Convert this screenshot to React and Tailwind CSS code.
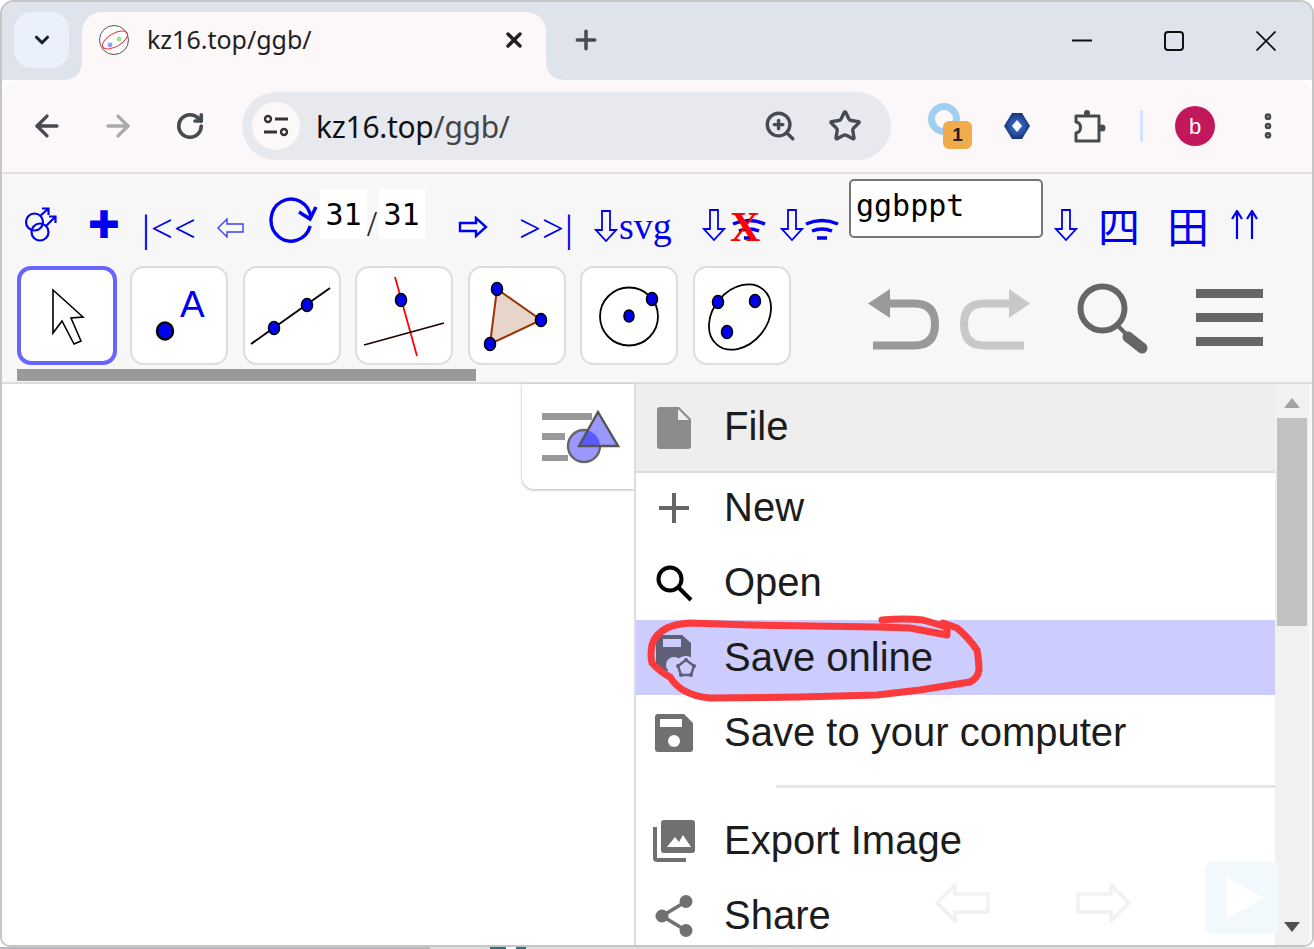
import { ChevronDown, X, Plus, ArrowLeft, ArrowRight, RotateCw, ZoomIn, Star, MoreVertical } from "lucide-react";

const Dot = ({ cx, cy, r = 5.5 }) => (
  <ellipse cx={cx} cy={cy} rx={r} ry={r + 1} fill="#0000f0" stroke="#000" strokeWidth="1.6" />
);

const tools = [
  <>
    <path d="M34 22 L34 65 L43 53 L55 76 L62 73 L52 50 L64 49 Z" fill="#fff" stroke="#000" strokeWidth="1.6" />
  </>,
  <>
    <ellipse cx="34" cy="63" rx="8" ry="8.5" fill="#0000f0" stroke="#000" strokeWidth="2.5" />
    <text x="49" y="48.5" fontSize="37" fill="#0000f0" fontFamily="Liberation Sans, sans-serif">A</text>
  </>,
  <>
    <line x1="7" y1="76" x2="86" y2="20" stroke="#000" strokeWidth="2" />
    <Dot cx={30} cy={60} />
    <Dot cx={63} cy={37} />
  </>,
  <>
    <line x1="39" y1="9" x2="61" y2="88" stroke="#f00" strokeWidth="1.8" />
    <line x1="8" y1="77" x2="88" y2="55" stroke="#200" strokeWidth="1.8" />
    <Dot cx={45} cy={32} />
  </>,
  <>
    <path d="M28 21 L72 52 L21 76 Z" fill="#e8d5ca" stroke="#993300" strokeWidth="2" />
    <Dot cx={28} cy={21} />
    <Dot cx={72} cy={52} />
    <Dot cx={21} cy={76} />
  </>,
  <>
    <circle cx="48" cy="48.5" r="29" fill="none" stroke="#000" strokeWidth="1.8" />
    <Dot cx={48} cy={48} r={5} />
    <Dot cx={71} cy={31} />
  </>,
  <>
    <ellipse cx="46" cy="49" rx="27" ry="36" transform="rotate(40 46 49)" fill="none" stroke="#000" strokeWidth="1.8" />
    <Dot cx={24} cy={34} />
    <Dot cx={61} cy={33} />
    <Dot cx={33} cy={64} />
  </>,
];

const Arrow = ({ className = "" }) => (
  <svg width="24" height="32" viewBox="0 0 24 32" className={className}>
    <path d="M8 1 H16 V20 H22 L12 31 L2 20 H8 Z" fill="none" stroke="#0000f0" strokeWidth="1.8" />
  </svg>
);

const Wifi = () => (
  <svg width="34" height="22" viewBox="0 0 34 22">
    <path d="M1 6 Q17 -1 33 6" fill="none" stroke="#0000f0" strokeWidth="3.5" />
    <path d="M7 13 Q17 9 27 13" fill="none" stroke="#0000f0" strokeWidth="3.5" />
    <path d="M12 20 H22" fill="none" stroke="#0000f0" strokeWidth="3.5" />
  </svg>
);

const MenuRow = ({ icon, label, className = "" }) => (
  <div className={`flex items-center shrink-0 ${className}`}>
    <div className="w-[88px] flex justify-center pr-[12px]">{icon}</div>
    <span className="text-[40px] text-[#1c1c1c] -mt-[2px]">{label}</span>
  </div>
);

export default function App() {
  return (
    <div className="w-[1314px] h-[949px] overflow-hidden bg-white font-['Liberation_Sans',sans-serif]">
      {/* window */}
      <div className="relative w-[1314px] h-[947px] rounded-t-[14px] rounded-b-[10px] border-2 border-[#c6c6c6] overflow-hidden flex flex-col bg-white">
        {/* tab strip */}
        <div className="h-[78px] shrink-0 bg-[#dfe3ec] flex pt-[10px] pl-[12px]">
          <div className="w-[55px] h-[56px] rounded-[18px] bg-[#ebf0fd] flex items-center justify-center">
            <ChevronDown size={22} strokeWidth={3.4} color="#1f1f1f" />
          </div>
          <div className="relative ml-[13px] w-[464px] h-[68px] rounded-t-[20px] bg-[#fcf8f9] flex items-center pl-[16px] pb-[12px]">
            <svg width="32" height="32" viewBox="0 0 32 32">
              <circle cx="16" cy="16" r="14.5" fill="#fff" stroke="#555" strokeWidth="1" />
              <ellipse cx="17" cy="16" rx="14" ry="6.5" transform="rotate(-30 17 16)" fill="none" stroke="#e33" strokeWidth="1" />
              <circle cx="12" cy="21" r="2.4" fill="#9a9af5" />
              <circle cx="21" cy="15" r="2.4" fill="#90e890" />
            </svg>
            <span className="ml-[17px] text-[25px] text-[#1f1f1f] font-['Noto_Sans',sans-serif]">kz16.top/ggb/</span>
            <X size={24} strokeWidth={3.4} color="#1f1f1f" className="ml-auto mr-[20px]" />
            <svg width="20" height="20" viewBox="0 0 20 20" className="absolute left-[-20px] bottom-0">
              <path d="M20 0 V20 H0 Q20 20 20 0 Z" fill="#fcf8f9" />
            </svg>
            <svg width="20" height="20" viewBox="0 0 20 20" className="absolute right-[-20px] bottom-0">
              <path d="M0 0 V20 H20 Q0 20 0 0 Z" fill="#fcf8f9" />
            </svg>
          </div>
          <Plus size={30} strokeWidth={2.8} color="#474a50" className="ml-[25px] mt-[13px]" />
          <div className="ml-auto flex pr-[36px] pt-[19px] gap-[72px]">
            <svg width="20" height="20" viewBox="0 0 20 20"><path d="M0 9.5 H20" stroke="#111" strokeWidth="2" /></svg>
            <div className="w-[20px] h-[20px] border-2 border-[#111] rounded-[4px]" />
            <svg width="20" height="20" viewBox="0 0 20 20"><path d="M0.5 0.5 L19.5 19.5 M19.5 0.5 L0.5 19.5" stroke="#111" strokeWidth="1.8" /></svg>
          </div>
        </div>

        {/* address bar */}
        <div className="h-[94px] shrink-0 bg-[#fcf8f9] rounded-t-[16px] border-b-2 border-[#e3dfe0] flex items-center pl-[28px]">
          <ArrowLeft size={34} strokeWidth={2.4} color="#474a50" />
          <ArrowRight size={34} strokeWidth={2.4} color="#a9a9ab" className="ml-[37px]" />
          <RotateCw size={30} strokeWidth={2.9} color="#474a50" className="ml-[40px]" />
          <div className="ml-[37px] w-[649px] h-[68px] rounded-full bg-[#e8e9ee] flex items-center pl-[10px]">
            <div className="w-[48px] h-[48px] rounded-full bg-[#fcf8f9] flex items-center justify-center">
              <svg width="28" height="28" viewBox="0 0 28 28" fill="none" stroke="#333" strokeWidth="2.4">
                <circle cx="6" cy="7" r="3" />
                <path d="M13 7 H26" strokeWidth="3" />
                <path d="M2 20 H15" strokeWidth="3" />
                <circle cx="22" cy="20" r="3" />
              </svg>
            </div>
            <span className="ml-[16px] text-[30px] text-[#111] font-['Noto_Sans',sans-serif] tracking-[-0.3px]">
              kz16.top<span className="text-[#444]">/ggb/</span>
            </span>
            <ZoomIn size={34} strokeWidth={2.4} color="#474a50" className="ml-auto" />
            <Star size={34} strokeWidth={2.4} color="#474a50" className="ml-[31px] mr-[29px]" />
          </div>
          <div className="relative ml-[37px] w-[44px] h-[46px]">
            <div className="w-[32px] h-[32px] rounded-full border-[7px] border-[#9fd0f0]" />
            <div className="absolute left-[15px] top-[18px] w-[29px] h-[28px] rounded-[6px] bg-[#f0ab4c] flex items-center justify-center text-[19px] font-bold text-[#222]">1</div>
          </div>
          <svg width="28" height="28" viewBox="0 0 28 28" className="ml-[31px]">
            <defs>
              <radialGradient id="gem">
                <stop offset="0%" stopColor="#3f7fe8" />
                <stop offset="100%" stopColor="#1a3478" />
              </radialGradient>
            </defs>
            <path d="M9 1 H19 L27 14 L19 27 H9 L1 14 Z" fill="url(#gem)" strokeLinejoin="round" />
            <path d="M14 8 L19 14 L14 20 L9 14 Z" fill="#fff" />
          </svg>
          <svg width="36" height="36" viewBox="0 0 36 36" fill="none" stroke="#474a50" strokeWidth="3" className="ml-[41px]" strokeLinejoin="round">
            <path d="M4 8 H27 V33 H4 V25 C10 24 10 15 4 14 Z" />
            <circle cx="15" cy="5" r="3" fill="#474a50" stroke="none" />
            <circle cx="30" cy="20" r="3.5" fill="#474a50" stroke="none" />
          </svg>
          <div className="ml-[32px] w-[3px] h-[32px] rounded bg-[#d3e3fd]" />
          <div className="ml-[32px] w-[40px] h-[40px] rounded-full bg-[#c2185b] flex items-center justify-center text-white text-[22px]">b</div>
          <MoreVertical size={32} strokeWidth={3} color="#474a50" className="ml-[37px]" />
        </div>

        {/* page */}
        <div className="flex-1 min-h-0 flex flex-col bg-white">
          {/* link row */}
          <div className="relative h-[76px] shrink-0 bg-[#f7f7f7] flex items-end text-[#0000f0] font-['Liberation_Serif',serif]">
            <svg width="36" height="36" viewBox="0 0 36 36" fill="none" stroke="#0000f0" strokeWidth="2.2" className="absolute left-[20px] bottom-[7px]">
              <circle cx="12.5" cy="15" r="8.5" />
              <circle cx="18" cy="25" r="8.5" />
              <path d="M18 9 L26 2 M20 1.5 H26.5 V8" />
              <path d="M24 19 L33 10 M27 9.5 H33.5 V16" />
            </svg>
            <span className="absolute left-[86px] bottom-[6px] text-[38px] leading-none font-['DejaVu_Sans',sans-serif]">✚</span>
            <span className="absolute left-[140px] bottom-[2px] text-[39px] leading-none tracking-[1px]">|&lt;&lt;</span>
            <svg width="28" height="20" viewBox="0 0 28 20" className="absolute left-[215px] bottom-[12px]">
              <path d="M1 10 L10 1 V6 H26 V14 H10 V19 Z" fill="none" stroke="#4040f0" strokeWidth="1.4" />
            </svg>
            <svg width="50" height="46" viewBox="0 0 50 46" className="absolute left-[267px] bottom-[7px]">
              <path d="M41.2 29 A20 21 0 1 1 41.9 21" fill="none" stroke="#0000f0" strokeWidth="3.4" />
              <path d="M30 15 L41 22 L47 10" fill="none" stroke="#0000f0" strokeWidth="3.4" />
            </svg>
            <div className="absolute left-[318px] bottom-[11px] w-[47px] h-[50px] bg-white text-black text-[30px] font-['DejaVu_Sans_Mono',monospace] flex justify-center leading-[50px] pt-[1px]">31</div>
            <span className="absolute left-[365px] bottom-[8px] text-[36px] leading-none text-[#222]">/</span>
            <div className="absolute left-[376px] bottom-[11px] w-[47px] h-[50px] bg-white text-black text-[30px] font-['DejaVu_Sans_Mono',monospace] flex justify-center leading-[50px] pt-[1px]">31</div>
            <svg width="32" height="22" viewBox="0 0 32 22" className="absolute left-[455px] bottom-[12px]">
              <path d="M3 7 H19 V2 L29 11 L19 20 V15 H3 Z" fill="none" stroke="#0000f0" strokeWidth="2.4" />
            </svg>
            <span className="absolute left-[517px] bottom-[2px] text-[39px] leading-none tracking-[1px]">&gt;&gt;|</span>
            <div className="absolute left-[592px] bottom-[8px] flex items-end">
              <Arrow />
              <span className="text-[38px] leading-[38px] pl-[1px] -mb-[3px]">svg</span>
            </div>
            <div className="absolute left-[700px] bottom-[9px] flex items-end">
              <Arrow />
              <div className="relative ml-[6px] mb-[1px]">
                <Wifi />
                <span className="absolute left-[-2px] top-[-12px] text-[#f00] font-bold text-[42px] leading-none">X</span>
              </div>
            </div>
            <div className="absolute left-[778px] bottom-[9px] flex items-end">
              <Arrow />
              <div className="ml-[1px] mb-[1px]"><Wifi /></div>
            </div>
            <div className="absolute left-[847px] top-[5px] w-[194px] h-[59px] bg-white border-2 border-[#767676] rounded-[5px] text-black text-[30px] leading-[50px] pl-[5px] font-['DejaVu_Sans_Mono',monospace]">ggbppt</div>
            <div className="absolute left-[1052px] bottom-[9px]"><Arrow /></div>
            <span className="absolute left-[1096px] bottom-[4px] text-[42px] leading-none font-['Noto_Sans_CJK_SC',sans-serif]">四</span>
            <span className="absolute left-[1165px] bottom-[4px] text-[42px] leading-none font-['Noto_Sans_CJK_SC',sans-serif]">田</span>
            <svg width="28" height="30" viewBox="0 0 28 30" fill="none" stroke="#0000f0" strokeWidth="2.2" className="absolute left-[1228px] bottom-[10px]">
              <path d="M7 1 V29 M2 9 L7 1 L12 9" />
              <path d="M22 1 V29 M17 9 L22 1 L27 9" />
            </svg>
          </div>

          {/* tool row */}
          <div className="relative h-[134px] shrink-0 bg-[#f7f7f7] border-b-2 border-[#dcdcdc] flex items-start pl-[15px] pt-[16px]">
            {tools.map((t, i) => (
              <div
                key={i}
                className={
                  i === 0
                    ? "w-[100px] h-[99px] mr-[13px] bg-white rounded-[14px] border-[4px] border-[#6666ff] flex items-center justify-center shrink-0"
                    : "w-[98px] h-[99px] mr-[14.6px] bg-white rounded-[14px] border-2 border-[#dddddd] flex items-center justify-center shrink-0"
                }
              >
                <svg width="96" height="96" viewBox="0 0 96 96" className="shrink-0">{t}</svg>
              </div>
            ))}
            <svg width="74" height="64" viewBox="0 0 74 64" className="ml-[62px] mt-[20px] shrink-0">
              <path d="M0 17.5 L22 3 V32 Z" fill="#999" />
              <path d="M20 17.5 H46 Q67 17.5 67 38 Q67 59.5 46 59.5 H5" fill="none" stroke="#999" strokeWidth="8" />
            </svg>
            <svg width="74" height="64" viewBox="0 0 74 64" className="ml-[16.4px] mt-[20px] shrink-0">
              <path d="M72 17.5 L51 3 V32 Z" fill="#c8c8c8" />
              <path d="M53 17.5 H26 Q6 17.5 6 38 Q6 59.5 26 59.5 H66" fill="none" stroke="#c8c8c8" strokeWidth="8" />
            </svg>
            <svg width="76" height="76" viewBox="0 0 76 76" className="ml-[44px] mt-[16px] shrink-0">
              <circle cx="26.5" cy="26.5" r="22" fill="none" stroke="#666" strokeWidth="6" />
              <path d="M42 44 L50 52" stroke="#666" strokeWidth="4" />
              <path d="M52 55 L66 66" stroke="#666" strokeWidth="11" strokeLinecap="round" />
            </svg>
            <div className="ml-[44px] mt-[23px] w-[67px] shrink-0 flex flex-col gap-[15px]">
              <div className="h-[9px] bg-[#666]" />
              <div className="h-[9px] bg-[#666]" />
              <div className="h-[9px] bg-[#666]" />
            </div>
            <div className="absolute left-[15px] bottom-[1px] w-[459px] h-[12px] bg-[#999]" />
          </div>

          {/* content */}
          <div className="flex-1 min-h-0 flex relative">
            <div className="flex-1 flex justify-end">
              <div className="w-[112px] h-[105px] bg-white rounded-bl-[12px] shadow-[0_1px_3px_rgba(0,0,0,0.3)] flex items-start pl-[20px] pt-[26px]">
                <svg width="78" height="54" viewBox="0 0 78 54">
                  <defs>
                    <clipPath id="disc"><circle cx="42" cy="36" r="16" /></clipPath>
                  </defs>
                  <rect x="0" y="3" width="50" height="7" fill="#999" />
                  <rect x="0" y="23" width="23" height="7" fill="#999" />
                  <rect x="0" y="45" width="26" height="6" fill="#999" />
                  <circle cx="42" cy="36" r="16" fill="#9999ff" stroke="#666" strokeWidth="2.4" />
                  <path d="M56 2 L76 36 L37 36 Z" fill="#9999ff" />
                  <path d="M56 2 L76 36 L37 36 Z" fill="#5a5aff" clipPath="url(#disc)" />
                  <path d="M56 2 L76 36 L37 36 Z" fill="none" stroke="#555" strokeWidth="2.4" />
                </svg>
              </div>
            </div>
            <div className="w-[678px] shrink-0 flex">
              <div className="w-[641px] border-l-2 border-[#ddd] flex flex-col overflow-hidden">
                <div className="h-[89px] shrink-0 bg-[#eeeeee] border-b-2 border-[#dcdcdc] flex items-center">
                  <div className="w-[88px] flex justify-center pr-[12px]">
                    <svg width="34" height="42" viewBox="0 0 34 42">
                      <path d="M3 0 H22 L34 12 V39 Q34 42 31 42 H3 Q0 42 0 39 V3 Q0 0 3 0 Z" fill="#8c8c8c" />
                      <path d="M21 2 L32 13 H21 Z" fill="#eee" />
                    </svg>
                  </div>
                  <span className="text-[40px] text-[#1c1c1c] -mt-[4px]">File</span>
                </div>
                <MenuRow
                  label="New"
                  className="h-[72px] pb-[2px]"
                  icon={
                    <svg width="32" height="32" viewBox="0 0 32 32"><path d="M16 1 V31 M1 16 H31" stroke="#666" strokeWidth="4" /></svg>
                  }
                />
                <MenuRow
                  label="Open"
                  className="h-[75px]"
                  icon={
                    <svg width="38" height="38" viewBox="0 0 38 38" fill="none" stroke="#000" strokeWidth="4">
                      <circle cx="15" cy="15" r="11.5" />
                      <path d="M23 23 L36 36" />
                    </svg>
                  }
                />
                <MenuRow
                  label="Save online"
                  className="h-[75px] bg-[#ccccff]"
                  icon={
                    <svg width="44" height="46" viewBox="0 0 44 46" className="ml-[8px]">
                      <path d="M3 0 H26 L35 8 V36 H0 V3 Q0 0 3 0 Z" fill="#5f5f77" />
                      <rect x="7" y="4" width="18" height="8" fill="#ccccff" />
                      <circle cx="18" cy="30" r="8" fill="#ccccff" />
                      <circle cx="30" cy="33" r="12" fill="#ccccff" />
                      <path d="M30 25 L38 31 L35 40 L25 40 L22 31 Z" fill="none" stroke="#5f5f77" strokeWidth="2.4" />
                      <circle cx="30" cy="25" r="2" fill="#5f5f77" />
                      <circle cx="38" cy="31" r="2" fill="#5f5f77" />
                      <circle cx="35" cy="40" r="2" fill="#5f5f77" />
                      <circle cx="25" cy="40" r="2" fill="#5f5f77" />
                      <circle cx="22" cy="31" r="2" fill="#5f5f77" />
                    </svg>
                  }
                />
                <MenuRow
                  label="Save to your computer"
                  className="h-[75px]"
                  icon={
                    <svg width="38" height="38" viewBox="0 0 38 38">
                      <path d="M3 0 H29 L38 9 V35 Q38 38 35 38 H3 Q0 38 0 35 V3 Q0 0 3 0 Z" fill="#707070" />
                      <rect x="5" y="5" width="22" height="8" fill="#fff" />
                      <circle cx="19" cy="27" r="6" fill="#fff" />
                    </svg>
                  }
                />
                <div className="ml-[140px] mt-[15px] h-[3px] shrink-0 bg-[#e6e6ea]" />
                <MenuRow
                  label="Export Image"
                  className="h-[75px] mt-[15px]"
                  icon={
                    <svg width="42" height="42" viewBox="0 0 42 42">
                      <rect x="8" y="0" width="34" height="33" rx="3" fill="#707070" />
                      <path d="M0 7 H4 V38 H33 V42 H4 Q0 42 0 38 Z" fill="#707070" />
                      <path d="M14 27 L22 17 L26 22 L30 15 L38 27 Z" fill="#fff" />
                    </svg>
                  }
                />
                <MenuRow
                  label="Share"
                  className="h-[75px]"
                  icon={
                    <svg width="38" height="42" viewBox="0 0 38 42" fill="#707070">
                      <circle cx="31" cy="6.5" r="6.5" />
                      <circle cx="7" cy="21" r="6.5" />
                      <circle cx="31" cy="35.5" r="6.5" />
                      <path d="M31 6.5 L7 21 L31 35.5" fill="none" stroke="#707070" strokeWidth="3.5" />
                    </svg>
                  }
                />
              </div>
              <div className="w-[34px] shrink-0 bg-[#f1f1f1] flex flex-col items-center">
                <svg width="16" height="10" viewBox="0 0 16 10" className="mt-[14px] shrink-0"><path d="M8 0 L16 10 H0 Z" fill="#a3a3a3" /></svg>
                <div className="mt-[10px] w-[30px] h-[208px] shrink-0 bg-[#c1c1c1]" />
                <svg width="16" height="10" viewBox="0 0 16 10" className="mt-[296px] shrink-0"><path d="M0 0 H16 L8 10 Z" fill="#505050" /></svg>
              </div>
              <div className="w-[3px] shrink-0 bg-[#f8f8f8]" />
            </div>

            {/* floating play controls */}
            <svg width="56" height="40" viewBox="0 0 56 40" className="absolute left-[933px] top-[499px]">
              <path d="M2 20 L20 2 V11 H53 V29 H20 V38 Z" fill="none" stroke="#f2f2f2" strokeWidth="3.5" />
            </svg>
            <svg width="56" height="40" viewBox="0 0 56 40" className="absolute left-[1073px] top-[499px]">
              <path d="M54 20 L36 2 V11 H3 V29 H36 V38 Z" fill="none" stroke="#f2f2f2" strokeWidth="3.5" />
            </svg>
            <div className="absolute left-[1203px] top-[477px] w-[74px] h-[73px] rounded-[8px] bg-[#f2f9fd] flex items-center justify-center pl-[5px]">
              <svg width="38" height="42" viewBox="0 0 38 42"><path d="M0 0 L38 21 L0 42 Z" fill="#fff" /></svg>
            </div>
          </div>
        </div>

        {/* hand drawn marker loop */}
        <svg width="1314" height="949" viewBox="2 2 1314 949" className="absolute left-0 top-0 pointer-events-none">
          <path
            d="M882 620 Q905 618 923 620 L947 627 L947 635 L910 628 L877 627 L750 625 L690 623 Q675 624 667 628 Q655 634 652 645 Q650 655 652 663 Q660 672 670 677 Q675 685 683 690 Q695 697 710 698 L800 697 L877 695 L920 690 Q945 686 970 682 Q978 678 979 670 Q979 660 977 650 Q968 637 957 628 L943 623"
            fill="none"
            stroke="#fb3a3d"
            strokeWidth="7"
            strokeLinecap="round"
            strokeLinejoin="round"
          />
        </svg>
      </div>

      {/* what shows behind the window at the bottom edge */}
      <div className="h-[2px] flex">
        <div className="w-[430px] bg-[#b8b8bf]" />
        <div className="w-[60px] bg-[#dddddd]" />
        <div className="w-[16px] bg-[#2f6f86]" />
        <div className="w-[10px]" />
        <div className="w-[10px] bg-[#2f6f86]" />
        <div className="flex-1 bg-[#dddddd]" />
      </div>
    </div>
  );
}
